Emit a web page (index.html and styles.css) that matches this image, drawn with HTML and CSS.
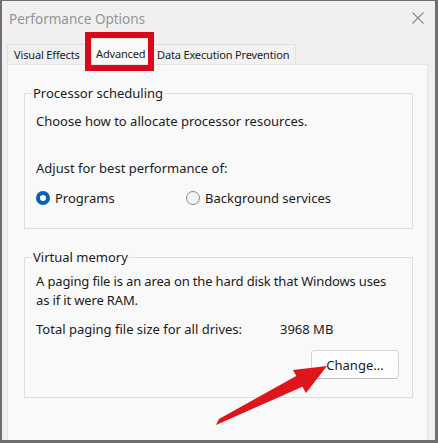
FILE: index.html
```html
<!DOCTYPE html>
<html>
<head>
<meta charset="utf-8">
<link rel="stylesheet" href="styles.css">
</head>
<body>
<div class="window">
  <div class="titlebar">
    <span class="title">Performance Options</span>
    <svg class="close" width="14" height="14" viewBox="0 0 14 14"><path d="M1.5 1.5 L12.5 12.5 M12.5 1.5 L1.5 12.5" stroke="#8a8a8a" stroke-width="1.1" fill="none"/></svg>
  </div>
  <div class="tabs">
    <div class="tab tab-first">Visual Effects</div>
    <div class="tab tab-sel">Advanced</div>
    <div class="tab tab-last">Data Execution Prevention</div>
    <div class="highlight"></div>
  </div>
  <div class="panel">
    <div class="group group-proc">
      <span class="legend">Processor scheduling</span>
      <div class="line">Choose how to allocate processor resources.</div>
      <div class="line adjust">Adjust for best performance of:</div>
      <div class="radios">
        <label class="radio-opt opt-first"><span class="radio on"></span>Programs</label>
        <label class="radio-opt"><span class="radio"></span>Background services</label>
      </div>
    </div>
    <div class="group group-vm">
      <span class="legend">Virtual memory</span>
      <div class="para">A paging file is an area on the hard disk that Windows uses<br>as if it were RAM.</div>
      <div class="line total"><span class="total-label">Total paging file size for all drives:</span><span>3968 MB</span></div>
      <div class="btnrow"><button class="btn">Change...</button></div>
    </div>
  </div>
</div>
<svg class="arrow" width="438" height="443" viewBox="0 0 438 443">
  <polygon points="216,425 219,419 298,375 304,386" fill="#e0141c"/>
  <polygon points="327,366 293,370 306,393" fill="#e0141c"/>
</svg>
</body>
</html>
```

FILE: styles.css
```css
html, body {
  margin: 0;
  padding: 0;
}
body {
  width: 438px;
  height: 443px;
  background: #6f6f6f;
  font-family: "Noto Sans", "Open Sans", sans-serif;
  color: #1b1b1b;
  position: relative;
  overflow: hidden;
}
.window {
  margin: 1px 3px 0 2px;
  height: 439px;
  background: #f0f0f0;
  display: flex;
  flex-direction: column;
  position: relative;
}
.titlebar {
  height: 36px;
  display: flex;
  align-items: center;
  justify-content: space-between;
  padding: 0 10px 0 7px;
  flex: none;
}
.title {
  font-size: 13.5px;
  color: #959595;
}
.close {
  display: block;
  margin-top: -2px;
}
.tabs {
  margin-top: 7px;
  height: 20px;
  display: flex;
  align-items: flex-end;
  padding-left: 5px;
  position: relative;
  flex: none;
}
.tab {
  font-size: 11px;
  letter-spacing: -0.15px;
  white-space: nowrap;
  overflow: hidden;
  height: 20px;
  line-height: 19px;
  box-sizing: border-box;
  background: #f0f0f0;
  border: 1px solid #e1e1e1;
  border-bottom: none;
  color: #1b1b1b;
}
.tab-first {
  padding: 0 4px 0 6px;
  width: 84px;
}
.tab-sel {
  height: 26px;
  line-height: 30px;
  background: #fafafa;
  width: 60px;
  padding-left: 4px;
  border-color: #e6e6e6;
}
.tab-last {
  padding: 0 4px 0 5px;
  width: 145px;
  background: #f2f2f2;
}
.highlight {
  position: absolute;
  left: 83px;
  top: -12px;
  width: 69px;
  height: 39px;
  box-sizing: border-box;
  border: 6px solid #d8091a;
}
.panel {
  flex: 1;
  margin: 0 7px 0 5px;
  background: #f9f9f9;
  border: 1px solid #e4e4e4;
  border-bottom: none;
  padding: 28px 14px 0 16px;
}
.group {
  position: relative;
  border: 1px solid #dedede;
  box-sizing: border-box;
  padding-left: 11px;
}
.legend {
  position: absolute;
  top: -10px;
  left: 7px;
  padding: 0 1px;
  background: #f9f9f9;
  font-size: 13px;
  line-height: 19px;
}
.group-proc {
  height: 136px;
  padding-top: 17px;
}
.line {
  font-size: 13px;
  line-height: 20px;
}
.adjust {
  margin-top: 27px;
}
.radios {
  margin-top: 10px;
  display: flex;
  font-size: 13px;
  line-height: 20px;
}
.radio-opt {
  display: flex;
  align-items: center;
}
.opt-first {
  width: 150px;
}
.radio {
  width: 14px;
  height: 14px;
  box-sizing: border-box;
  border-radius: 50%;
  border: 1px solid #8a8a8a;
  background: #f3f3f3;
  margin-right: 5px;
}
.radio.on {
  border: 4.5px solid #0b5fb1;
  background: #ffffff;
}
.group-vm {
  margin-top: 28px;
  height: 141px;
  padding-top: 14px;
}
.para {
  font-size: 13px;
  line-height: 19px;
  letter-spacing: -0.15px;
}
.total {
  margin-top: 9px;
  display: flex;
}
.total-label {
  width: 244px;
}
.btnrow {
  margin-top: 11px;
  display: flex;
  justify-content: flex-end;
  padding-right: 13px;
}
.btn {
  width: 88px;
  height: 29px;
  font-family: inherit;
  font-size: 13px;
  color: #1b1b1b;
  background: #fdfdfd;
  border: 1px solid #d5d5d5;
  border-bottom-color: #c4c4c4;
  border-radius: 4px;
  padding: 0;
}
.arrow {
  position: absolute;
  left: 0;
  top: 0;
  pointer-events: none;
}
```
